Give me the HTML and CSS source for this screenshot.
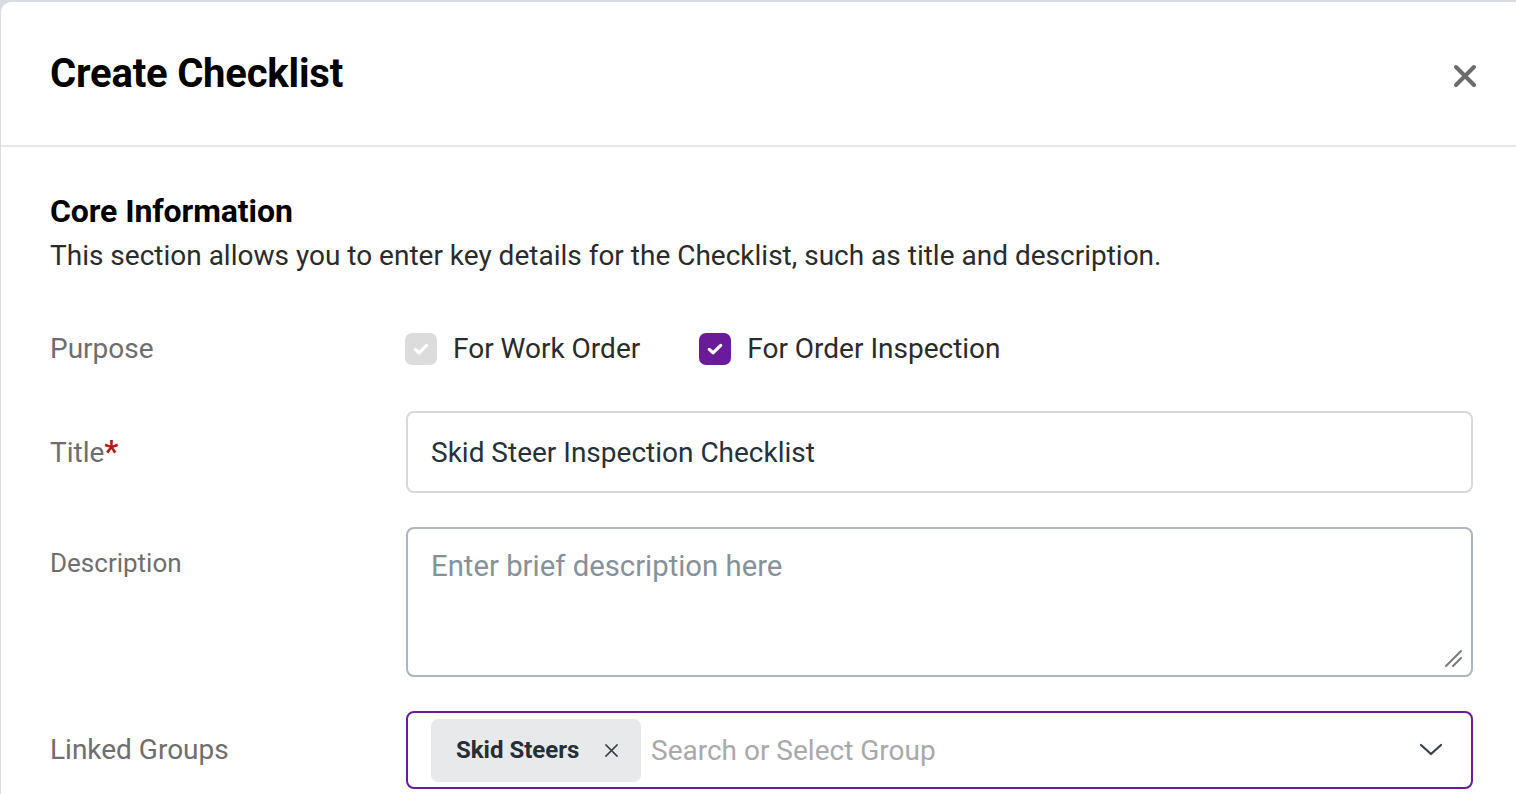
FILE: index.html
```html
<!DOCTYPE html>
<html lang="en">
<head>
<meta charset="utf-8">
<title>Create Checklist</title>
<link rel="stylesheet" href="styles.css">
</head>
<body>
<div class="modal">
  <header class="modal-header">
    <h1 class="modal-title">Create Checklist</h1>
    <button class="close-btn" aria-label="Close">
      <svg viewBox="0 0 24 24" width="24" height="24"><path d="M3 3 L21 21 M21 3 L3 21" stroke="#6b6b6b" stroke-width="4" stroke-linecap="round" fill="none"/></svg>
    </button>
  </header>
  <section class="modal-body">
    <h2 class="section-title">Core Information</h2>
    <p class="section-desc">This section allows you to enter key details for the Checklist, such as title and description.</p>

    <div class="form">
      <div class="label purpose-label">Purpose</div>
      <div class="purpose-options">
        <label class="check-option">
          <span class="checkbox disabled">
            <svg viewBox="0 0 20 20" width="20" height="20"><path d="M4.3 10.4 L8.1 13.8 L15.7 6.4" stroke="#fff" stroke-width="3.2" fill="none" stroke-linecap="round" stroke-linejoin="round"/></svg>
          </span>
          <span class="check-text">For Work Order</span>
        </label>
        <label class="check-option">
          <span class="checkbox checked">
            <svg viewBox="0 0 20 20" width="20" height="20"><path d="M4.3 10.4 L8.1 13.8 L15.7 6.4" stroke="#fff" stroke-width="3.2" fill="none" stroke-linecap="round" stroke-linejoin="round"/></svg>
          </span>
          <span class="check-text">For Order Inspection</span>
        </label>
      </div>

      <div class="label title-label">Title<span class="req">*</span></div>
      <div class="text-input">Skid Steer Inspection Checklist</div>

      <div class="label desc-label">Description</div>
      <div class="textarea">
        <span class="placeholder">Enter brief description here</span>
        <svg class="resize" viewBox="0 0 20 20" width="20" height="20"><path d="M3 18 L18 3 M10 18 L18 10" stroke="#7a7a7a" stroke-width="2" stroke-linecap="round"/></svg>
      </div>

      <div class="label linked-label">Linked Groups</div>
      <div class="select">
        <span class="chip">
          <span class="chip-text">Skid Steers</span>
          <svg class="chip-x" viewBox="0 0 16 16" width="16" height="16"><path d="M2 2 L14 14 M14 2 L2 14" stroke="#3a3f45" stroke-width="1.6" stroke-linecap="round"/></svg>
        </span>
        <span class="select-placeholder">Search or Select Group</span>
        <svg class="chevron" viewBox="0 0 24 14" width="24" height="14"><path d="M2 2 L12 11 L22 2" stroke="#36404a" stroke-width="2.2" fill="none" stroke-linecap="round" stroke-linejoin="round"/></svg>
      </div>
    </div>
  </section>
</div>
</body>
</html>
```

FILE: styles.css
```css
* { box-sizing: border-box; }
html, body { margin: 0; padding: 0; }
body {
  background: #d9dde2;
  font-family: Roboto, "Liberation Sans", Arial, sans-serif;
  height: 794px;
  overflow: hidden;
}
.modal {
  margin: 2px 0 0 1px;
  background: #fff;
  border-top-left-radius: 10px;
  height: 792px;
}
.modal-header {
  height: 145px;
  border-bottom: 2px solid #e6e7e9;
  display: flex;
  align-items: center;
  justify-content: space-between;
  padding: 0 39px 0 49px;
}
.modal-title {
  margin: 0;
  font-size: 40px;
  font-weight: 700;
  color: #000;
  letter-spacing: -0.2px;
}
.close-btn {
  border: 0;
  background: none;
  padding: 0;
  width: 24px;
  height: 24px;
  margin-top: 4px;
  display: flex;
  cursor: pointer;
}
.modal-body {
  padding: 44px 43px 0 49px;
}
.section-title {
  margin: 0;
  font-size: 32px;
  line-height: 40px;
  font-weight: 700;
  color: #000;
  letter-spacing: -0.1px;
}
.section-desc {
  margin: 7px 0 0;
  font-size: 28px;
  line-height: 36px;
  color: #2b2b2b;
}
.form {
  display: grid;
  grid-template-columns: 356px 1fr;
  margin-top: 57px;
  row-gap: 34px;
}
.label {
  font-size: 28px;
  line-height: 36px;
  color: #6e6e6e;
}
.purpose-label { align-self: start; height: 36px; }
.title-label, .linked-label { align-self: center; }
.desc-label { padding-top: 18px; font-size: 26px; }
.purpose-options {
  align-self: start;
  display: flex;
  align-items: center;
  height: 36px;
  gap: 59px;
  margin-left: -1px;
  margin-bottom: 10px;
}
.check-option {
  display: flex;
  align-items: center;
  gap: 16px;
  font-size: 28px;
  line-height: 36px;
  color: #2b2b2b;
}
.checkbox {
  width: 32px;
  height: 32px;
  border-radius: 7px;
  display: flex;
  align-items: center;
  justify-content: center;
}
.checkbox.disabled { background: #dcdcdc; }
.checkbox.checked { background: #6a1b9a; }
.req { color: #b01c1c; font-weight: 700; font-size: 31px; margin-left: 0; }
.text-input {
  height: 82px;
  border: 2px solid #d9d9d9;
  border-radius: 8px;
  padding: 0 23px;
  display: flex;
  align-items: center;
  font-size: 28px;
  color: #27313b;
}
.textarea {
  position: relative;
  height: 150px;
  border: 2px solid #adb5bd;
  border-radius: 8px;
  padding: 19px 23px;
  font-size: 29.3px;
  line-height: 36px;
}
.placeholder { color: #87919b; }
.resize {
  position: absolute;
  right: 8px;
  bottom: 7px;
}
.select {
  height: 78px;
  border: 2px solid #6a1b9a;
  border-radius: 8px;
  padding: 0 28px 0 23px;
  display: flex;
  align-items: center;
}
.chip {
  background: #e8e9eb;
  border-radius: 7px;
  height: 63px;
  width: 210px;
  display: flex;
  align-items: center;
  padding: 0 22px 0 25px;
  justify-content: space-between;
}
.chip-text {
  font-size: 24px;
  font-weight: 700;
  color: #262e36;
}
.chip-x { width: 15px; height: 15px; }
.select-placeholder {
  margin-left: 10px;
  font-size: 28px;
  color: #a9a9a9;
  flex: 1;
}
.chevron { width: 24px; height: 14px; }
```
